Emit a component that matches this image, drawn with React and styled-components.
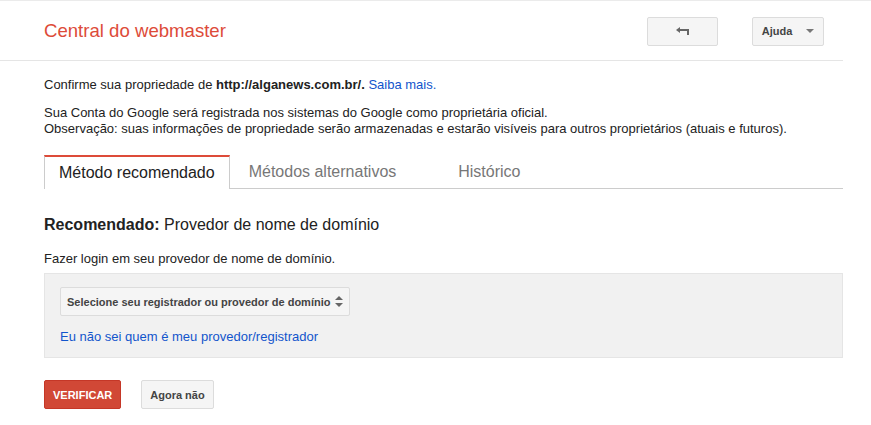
import React from 'react'
import styled, { createGlobalStyle } from 'styled-components'

const GlobalStyle = createGlobalStyle`
  body {
    margin: 0;
    background: #fff;
    font-family: "Liberation Sans", Arial, sans-serif;
    font-size: 13px;
    color: #222;
    border-top: 1px solid #ebebeb;
  }
`;

const Page = styled.div`
  width: 843px;
`;

const Header = styled.header`
  height: 59px;
  border-bottom: 1px solid #e5e5e5;
  display: flex;
  align-items: center;
  padding: 0 19px 0 44px;
`;

const Title = styled.h1`
  flex: 1;
  margin: 0;
  font-size: 18.6px;
  font-weight: normal;
  color: #dd4b39;
`;

const HeaderButton = styled.button`
  height: 29px;
  width: ${p => p.$w}px;
  margin-left: ${p => p.$gap || 0}px;
  margin-top: 1px;
  border: 1px solid #dcdcdc;
  border-radius: 2px;
  background: #f5f5f5;
  color: #444;
  font-family: inherit;
  font-size: 11px;
  font-weight: bold;
  display: flex;
  align-items: center;
  justify-content: center;
  gap: 14px;
  padding: 0;
`;

const Caret = styled.span`
  width: 0;
  height: 0;
  border-left: 4px solid transparent;
  border-right: 4px solid transparent;
  border-top: 4px solid #777;
`;

const Content = styled.main`
  padding-left: 44px;
`;

const Para = styled.p`
  margin: ${p => p.$m || '0'};
  line-height: 16px;
`;

const Link = styled.a`
  color: #15c;
  text-decoration: none;
`;

const Tabs = styled.nav`
  display: flex;
  margin-top: 18px;
  border-bottom: 1px solid #ccc;
  height: 33px;
`;

const Tab = styled.div`
  box-sizing: border-box;
  min-width: 156px;
  padding: 0 14px 1px ${p => p.$indent || 14}px;
  height: ${p => (p.$active ? '34px' : '33px')};
  display: flex;
  align-items: center;
  justify-content: center;
  font-size: 16px;
  color: ${p => (p.$active ? '#222' : '#777')};
  background: #fff;
  border: 1px solid ${p => (p.$active ? '#ccc' : 'transparent')};
  border-top: 2px solid ${p => (p.$active ? '#dd4b39' : 'transparent')};
  border-bottom: none;
`;

const Heading = styled.h2`
  margin: 26px 0 0;
  font-size: 16px;
  font-weight: normal;
  line-height: 20px;
  b { font-weight: bold; }
`;

const Panel = styled.div`
  margin-top: 6px;
  background: #f1f1f1;
  border: 1px solid #e5e5e5;
  padding: 13px 15px 12px;
  height: 58px;
`;

const Select = styled.div`
  display: inline-flex;
  align-items: center;
  height: 27px;
  padding: 0 6px;
  border: 1px solid #dcdcdc;
  border-radius: 2px;
  background: #f5f5f5;
  color: #444;
  font-size: 11px;
  font-weight: bold;
  gap: 5px;
`;

const PanelLink = styled(Link)`
  display: block;
  margin-top: 13px;
  line-height: 16px;
`;

const Actions = styled.div`
  display: flex;
  gap: 20px;
  margin-top: 22px;
`;

const Action = styled.button`
  height: 29px;
  padding: 0 8px;
  border-radius: 2px;
  font-family: inherit;
  font-size: 11px;
  font-weight: bold;
  border: 1px solid ${p => (p.$primary ? '#c53727' : '#dcdcdc')};
  background: ${p => (p.$primary ? '#d14836' : '#f5f5f5')};
  color: ${p => (p.$primary ? '#fff' : '#444')};
`;

const BackIcon = () => (
  <svg width="13" height="8" viewBox="0 0 13 8">
    <polygon points="0,3 4,0 4,6" fill="#666" />
    <rect x="4" y="2" width="9" height="2" fill="#666" />
    <rect x="11" y="2" width="2" height="6" fill="#666" />
  </svg>
);

const UpDown = () => (
  <svg width="8" height="11" viewBox="0 0 8 11">
    <polygon points="0,4 4,0 8,4" fill="#666" />
    <polygon points="0,7 8,7 4,11" fill="#666" />
  </svg>
);

const App = () => {
  return (
    <Page>
      <GlobalStyle />
      <Header>
        <Title>Central do webmaster</Title>
        <HeaderButton $w={71} aria-label="Voltar"><BackIcon /></HeaderButton>
        <HeaderButton $w={72} $gap={34}>Ajuda<Caret /></HeaderButton>
      </Header>
      <Content>
        <Para $m="16px 0 0">
          Confirme sua propriedade de <b>http://alganews.com.br/.</b> <Link href="#">Saiba mais.</Link>
        </Para>
        <Para $m="12px 0 0">
          Sua Conta do Google será registrada nos sistemas do Google como proprietária oficial.<br />
          Observação: suas informações de propriedade serão armazenadas e estarão visíveis para outros proprietários (atuais e futuros).
        </Para>
        <Tabs>
          <Tab $active>Método recomendado</Tab>
          <Tab $indent={18}>Métodos alternativos</Tab>
          <Tab>Histórico</Tab>
        </Tabs>
        <Heading><b>Recomendado:</b> Provedor de nome de domínio</Heading>
        <Para $m="16px 0 0">Fazer login em seu provedor de nome de domínio.</Para>
        <Panel>
          <Select>Selecione seu registrador ou provedor de domínio <UpDown /></Select>
          <PanelLink href="#">Eu não sei quem é meu provedor/registrador</PanelLink>
        </Panel>
        <Actions>
          <Action $primary>VERIFICAR</Action>
          <Action>Agora não</Action>
        </Actions>
      </Content>
    </Page>
  )
}

export default App
